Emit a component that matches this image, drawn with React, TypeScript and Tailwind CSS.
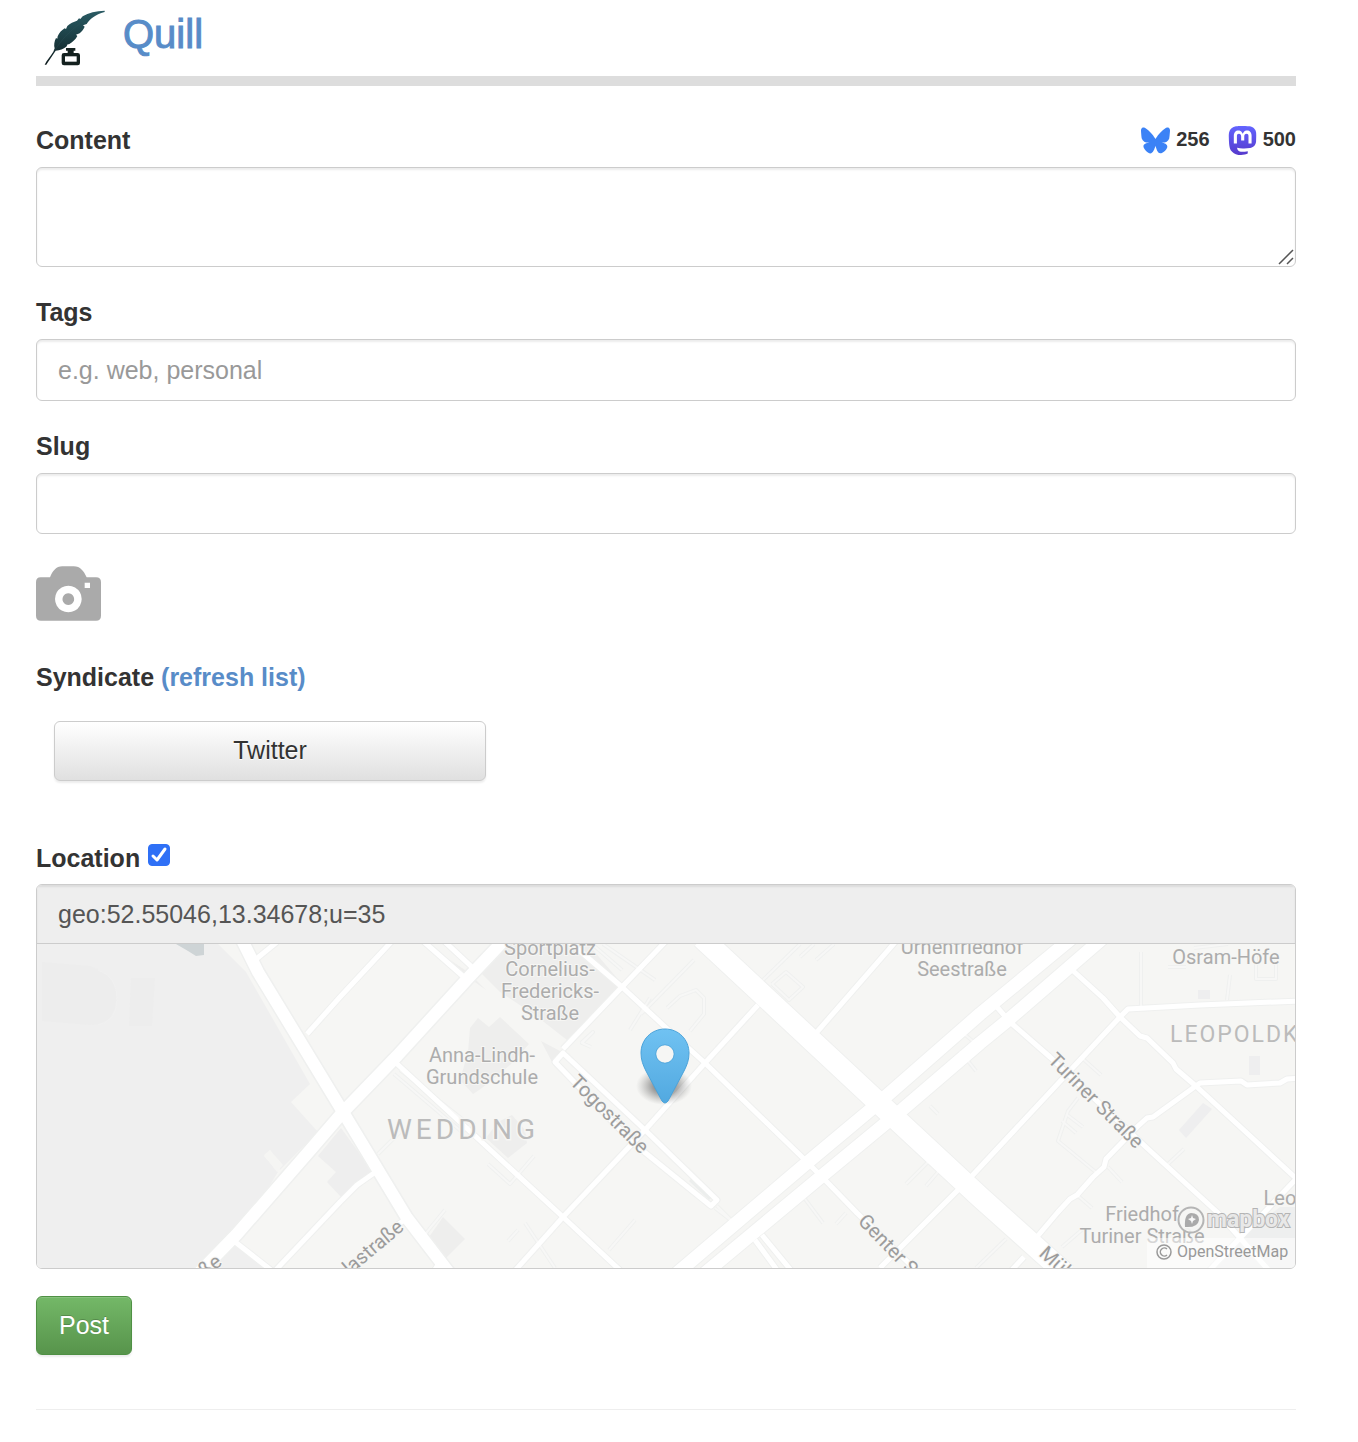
import React from "react";
import { FaBluesky } from "react-icons/fa6";
import { SiMastodon } from "react-icons/si";

const labelClass = "block text-[25px] leading-9 font-bold";
const fieldClass =
  "block w-full rounded-md border border-[#ccc] bg-white px-[21px] text-[25px] text-[#555] shadow-[inset_0_2px_2px_rgba(0,0,0,0.075)] placeholder:text-[#999]";

function QuillLogo() {
  return (
    <svg viewBox="42 31 183 168" className="h-14 w-[61px]" aria-hidden="true">
      <defs>
        <linearGradient id="feather" x1="0" y1="0" x2="0" y2="1">
          <stop offset="0" stopColor="#2a5b64" />
          <stop offset="0.5" stopColor="#1c3f45" />
          <stop offset="1" stopColor="#0f1b1d" />
        </linearGradient>
      </defs>
      <path
        fill="url(#feather)"
        d="M224 33C198 34 176 39 158 50L151 58L147 56L141 63C131 66 120 71 112 79L108 88L104 86C94 92 87 100 83 110L82 117L78 115C73 125 71 137 74 146L70 156C61 170 50 182 44 195L49 195C56 184 66 170 77 153C90 152 100 148 109 141L113 134L117 134C128 127 137 119 142 109L138 105L149 101C156 95 161 88 164 81L159 77L170 73C179 59 195 45 224 37Z"
      />
      <path d="M76 150C92 124 116 96 150 72" fill="none" stroke="#31565b" strokeWidth="1" />
      <path fill="#14211f" d="M108 145h28v8h-5v7h12q7 0 7 7v23q0 7-7 7h-41q-7 0-7-7v-23q0-7 7-7h11v-7h-5z" />
      <rect x="105" y="170" width="35" height="16" fill="#fff" />
    </svg>
  );
}

function CameraIcon() {
  return (
    <svg viewBox="18 33 195 165" className="h-[55px] w-[65px]" aria-hidden="true">
      <path
        fill="#aaa"
        fillRule="evenodd"
        d="M32 67H60C68 48 78 34 97 34H131C151 34 161 48 170 67H198Q213 67 213 82V182Q213 197 198 197H33Q18 197 18 182V82Q18 67 32 67ZM164 83V99H180V83ZM115 92a40 40 0 1 0 .1 0ZM115 115a17.500 17.500 0 1 1-.1 0Z"
      />
    </svg>
  );
}

const majorRoads = [
  "M242 940L258 972L343 1112L407 1218L450 1274",
  "M506 938L470 976L397 1056L343 1112L312 1148L237 1234L198 1274",
];
const boulevards = [
  "M676 1274L802 1167L875 1106L980 1014L1072 938",
  "M704 1274L817 1180L892 1118L903 1109L980 1043L1007 1021L1103 938",
];
const minorRoads = [
  "M255 960L277 942",
  "M307 1034L340 997L393 940",
  "M423 941L465 978M444 941L474 969",
  "M395 1062L563 1217L624 1274",
  "M566 939L622 987L663 1025L705 1063L802 1157L827 1182L857 1213L920 1274",
  "M667 940L622 987L563 1049",
  "M645 1130L717 1200L711 1206L632 1142L555 1062L563 1053L645 1130",
  "M758 1005L705 1063L645 1130L563 1217L512 1274",
  "M897 940L817 1032",
  "M1070 968L1103 998L1120 1017L1140 1036L1147 1038L1173 1063L1176 1069L1197 1087L1300 1182",
  "M970 1178L1120 1017L1128 1009L1200 1005L1300 1001",
  "M997 1007L1010 1022L1050 1057L1147 1148L1217 1212L1272 1274",
  "M1300 1078L1287 1079L1280 1083L1247 1085L1241 1081L1200 1083L1153 1117L1147 1118L1137 1127L1106 1159L1104 1167L1093 1177L1077 1195L1070 1199L1058 1212L1036 1238",
  "M1298 1177L1240 1238L1206 1274",
  "M958 1190L900 1248L880 1268M1024 1257L1010 1272",
  "M755 1240L780 1274M762 1235L794 1274",
  "M377 1171L357 1185L340 1202L272 1274",
  "M407 1218L392 1229M234 1241L276 1274M432 1274L440 1262",
];
const footways = [
  "M394 1074L462 1132L475 1122M400 1070L470 1125M488 1164L510 1184L534 1156M592 944L622 970M603 944L655 980M630 1030L650 998M641 1014L694 960M667 1008L680 996L696 990L704 998L704 1014L690 1031M581 1043L593 1032L582 1043L591 1047",
  "M763 980L800 944M772 984L786 972L803 987L789 1000L772 984M800 957L814 944M816 960L834 944M938 1114L930 1106M906 1184L928 1162M926 1186L938 1172M805 1199L823 1223M836 1224L846 1213M960 1051L976 1071M964 1034L980 1047M378 1154L400 1132M422 1238L445 1210M508 1241L518 1230M525 1223L555 1268M609 1250L635 1220M715 1208L733 1222L717 1206",
  "M1141 952V1006M1230 975L1227 1000M1082 1058L1101 1075M1078 1098L1068 1111L1058 1141L1098 1174M1062 1121L1076 1133M1066 1114L1083 1127M1108 1167L1122 1182M1077 1195L1092 1208M1168 1164L1184 1149M1168 967H1186M1256 956V979H1276V956M976 1268L1006 1239M1062 1247L1084 1228M1194 948L1228 944",
];

type MapLabel = { x: number; y: number; text: string };
const placeLabels: MapLabel[] = [
  { x: 550, y: 955, text: "Sportplatz" },
  { x: 550, y: 976, text: "Cornelius-" },
  { x: 550, y: 998, text: "Fredericks-" },
  { x: 550, y: 1020, text: "Straße" },
  { x: 482, y: 1062, text: "Anna-Lindh-" },
  { x: 482, y: 1084, text: "Grundschule" },
  { x: 962, y: 954, text: "Urnenfriedhof" },
  { x: 962, y: 976, text: "Seestraße" },
  { x: 1226, y: 964, text: "Osram-Höfe" },
  { x: 1142, y: 1221, text: "Friedhof" },
  { x: 1142, y: 1243, text: "Turiner Straße" },
  { x: 1280, y: 1205, text: "Leo" },
];

function LocationMap() {
  return (
    <svg
      viewBox="37 944 1258 324"
      preserveAspectRatio="xMidYMid slice"
      className="block h-[324px] w-full bg-[#f6f6f4] font-[Roboto,sans-serif]"
      role="img"
      aria-label="Map of Berlin-Wedding with the current location"
    >
      <defs>
        <linearGradient id="pin" x1="0" y1="0" x2="0" y2="1">
          <stop offset="0" stopColor="#70c2f2" />
          <stop offset="1" stopColor="#52a9e0" />
        </linearGradient>
        <radialGradient id="pinShadow">
          <stop offset="0" stopColor="#222" stopOpacity="0.8" />
          <stop offset="0.5" stopColor="#444" stopOpacity="0.4" />
          <stop offset="1" stopColor="#777" stopOpacity="0" />
        </radialGradient>
      </defs>

      <path d="M37 944H218L246 972L310 1084L291 1102L318 1132L280 1170L270 1150L264 1156L278 1172L235 1242L272 1268H37Z" fill="#efefef" />
      <path d="M264 1155L270 1150L283 1165L277 1172Z" fill="#f5f5f3" />
      <path d="M42 962L90 966Q117 975 117 1000Q114 1025 90 1025L42 1021ZM131 978H155L152 1026H129Z" fill="#ededed" />
      <path d="M98 970Q118 977 117 1000Q116 1022 98 1025" fill="none" stroke="#f0f0f0" strokeWidth="1" />
      <path d="M176 944H204V955L196 956L188 951Z" fill="#ced4d6" />
      <path
        fill="#eeeeed"
        d="M500 944H588L622 984L567 1040L535 1015L500 992L480 972ZM470 1028L478 1018L489 1027L500 1017L529 1044L510 1065L495 1077L482 1088L473 1094L460 1080L468 1052ZM486 1138L498 1122L512 1115L525 1130L527 1143L508 1158ZM541 1041L562 1052L552 1062ZM427 1240L443 1217L465 1239L446 1258ZM450 960L468 972L478 982L486 990L472 980Z"
      />
      <path d="M318 1156L341 1128L373 1172L342 1198L327 1182L336 1172Z" fill="#eeeeee" />
      <path d="M1198 990H1210V999H1198ZM1249 1056H1260V1075H1249ZM1179 1130L1203 1103L1212 1109L1186 1138Z" fill="#eeeeef" />
      <path d="M1240 1238L1280 1207H1295V1268H1215Z" fill="#eeefef" />

      <g fill="none" strokeLinejoin="round">
        <g stroke="#eff0ef">
          {footways.map((d) => (
            <path key={d} d={d} strokeWidth="4" />
          ))}
          {minorRoads.map((d) => (
            <path key={d} d={d} strokeWidth="7" />
          ))}
          {majorRoads.map((d) => (
            <path key={d} d={d} strokeWidth="15" />
          ))}
          {boulevards.map((d) => (
            <path key={d} d={d} strokeWidth="15" />
          ))}
          <path d="M702 938L882 1106L980 1197L1066 1274" strokeWidth="23" />
        </g>
        <g stroke="#fff">
          {footways.map((d) => (
            <path key={d} d={d} strokeWidth="2" stroke="#f7f7f6" />
          ))}
          {minorRoads.map((d) => (
            <path key={d} d={d} strokeWidth="5" />
          ))}
          {majorRoads.map((d) => (
            <path key={d} d={d} strokeWidth="12" />
          ))}
          {boulevards.map((d) => (
            <path key={d} d={d} strokeWidth="13" />
          ))}
          <path d="M702 938L882 1106L980 1197L1066 1274" strokeWidth="21" />
        </g>
      </g>
      <path d="M690 1180L710 1199" stroke="#eceeed" strokeWidth="3" />

      <g className="text-[20px]" fill="#acacac" stroke="#f6f6f4" strokeWidth="2" paintOrder="stroke" textAnchor="middle">
        {placeLabels.map((label) => (
          <text key={label.text} x={label.x} y={label.y}>
            {label.text}
          </text>
        ))}
      </g>
      <g fill="#bbb" stroke="#f6f6f4" strokeWidth="3" paintOrder="stroke">
        <text x="387" y="1139" className="text-[28px] tracking-[4px]">WEDDING</text>
        <text x="1170" y="1042" className="text-[23px] tracking-[2px]">LEOPOLDK</text>
      </g>
      <g className="text-[20px]" fill="#9c9c9c" stroke="#f6f6f4" strokeWidth="2" paintOrder="stroke">
        <text transform="translate(569 1083) rotate(45)">Togostraße</text>
        <text transform="translate(1047 1061) rotate(45)">Turiner Straße</text>
        <text transform="translate(857 1222) rotate(46)">Genter S</text>
        <text transform="translate(1038 1255) rotate(42)">Mül</text>
        <text transform="translate(405 1229) rotate(-40)" textAnchor="end">lastraße</text>
        <text transform="translate(223 1264) rotate(-38)" textAnchor="end">ße</text>
      </g>

      <ellipse cx="664" cy="1086" rx="28" ry="19" fill="url(#pinShadow)" />
      <path
        d="M665 1029C651 1029 641 1040 641 1053C641 1060 643 1065 646 1071L662 1101Q665 1105 668 1101L684 1071C687 1065 689 1060 689 1053C689 1040 679 1029 665 1029ZM665 1045A9 9 0 1 1 664.900 1045Z"
        fill="url(#pin)"
        stroke="#4ba3da"
        strokeWidth="1"
      />
      <circle cx="665" cy="1054" r="8.500" fill="#f6f6f4" />

      <rect x="1147" y="1238" width="148" height="30" fill="#fff" fillOpacity="0.5" />
      <g>
        <circle cx="1191" cy="1220" r="12.500" fill="#f6f6f4" fillOpacity="0.9" stroke="#b5b5b5" strokeWidth="2" />
        <path d="M1185 1227Q1184 1214 1191 1213Q1199 1213 1199 1220Q1198 1228 1185 1227Z" fill="#aaa" />
        <path d="M1192 1215L1193 1218L1196 1219L1193 1221L1192 1224L1191 1221L1188 1219L1191 1218Z" fill="#f8f8f8" />
        <text x="1207" y="1227" className="text-[23px] font-bold" fill="#e8e8e8" stroke="#b4b4b4" strokeWidth="2" paintOrder="stroke">
          mapbox
        </text>
      </g>
      <circle cx="1164" cy="1252" r="7" fill="none" stroke="#999" strokeWidth="1.500" />
      <path d="M1167 1249A4 4 0 1 0 1167 1255" fill="none" stroke="#999" strokeWidth="1.500" />
      <text x="1177" y="1257" className="text-[16px]" fill="#999">OpenStreetMap</text>
    </svg>
  );
}

export default function App() {
  return (
    <div className="min-h-screen bg-white pr-[62px] pl-9 font-['Liberation_Sans',Arial,sans-serif] text-[#333]">
      <header className="flex h-[86px] items-start gap-[18px] border-b-10 border-[#ddd] pt-[10px] pl-2">
        <QuillLogo />
        <h1 className="text-[40px] leading-12 text-[#588cc8] [-webkit-text-stroke:1px_#588cc8]">
          <a href="#home">Quill</a>
        </h1>
      </header>

      <form className="pt-9" onSubmit={(e) => e.preventDefault()}>
        <div className="mb-[27px]">
          <div className="mb-[9px] flex items-start justify-between">
            <label htmlFor="content" className={labelClass}>Content</label>
            <div className="flex gap-[18px] text-xl leading-7 font-bold">
              <span className="flex items-center gap-[6px]">
                <FaBluesky className="mt-1 size-[29px]" color="#3b82f6" aria-hidden="true" />
                256
              </span>
              <span className="flex items-center gap-[6px]">
                <svg width="0" height="0" className="absolute" aria-hidden="true">
                  <linearGradient id="mastodon" x1="0" y1="0" x2="0" y2="1">
                    <stop offset="0" stopColor="#6364ff" />
                    <stop offset="1" stopColor="#563acc" />
                  </linearGradient>
                </svg>
                <SiMastodon className="mt-1 size-[29px]" fill="url(#mastodon)" aria-hidden="true" />
                500
              </span>
            </div>
          </div>
          <div className="relative">
            <textarea id="content" className={`${fieldClass} h-[100px] resize-none py-[10px]`} />
            <svg viewBox="0 0 16 16" className="pointer-events-none absolute right-[2px] bottom-[2px] size-4" aria-hidden="true">
              <path d="M1 15L15 1M9 15L15 9" stroke="#555" strokeWidth="1.500" fill="none" />
            </svg>
          </div>
        </div>

        <div className="mb-[27px]">
          <label htmlFor="tags" className={`${labelClass} mb-[9px]`}>Tags</label>
          <input id="tags" type="text" placeholder="e.g. web, personal" className={`${fieldClass} h-[62px]`} />
        </div>

        <div className="mb-8">
          <label htmlFor="slug" className={`${labelClass} mb-[9px]`}>Slug</label>
          <input id="slug" type="text" className={`${fieldClass} h-[61px]`} />
        </div>

        <button type="button" aria-label="Add photo" className="block">
          <CameraIcon />
        </button>

        <div className="mt-[38px]">
          <p className={labelClass}>
            Syndicate <a href="#refresh" className="text-[#588cc8]">(refresh list)</a>
          </p>
          <button
            type="button"
            className="mt-[26px] ml-[18px] block h-[60px] w-[432px] max-w-full rounded-md border border-[#ccc] bg-linear-to-b from-white to-[#e0e0e0] text-[25px] shadow-[0_2px_2px_rgba(0,0,0,0.075)] [text-shadow:0_1px_0_#fff]"
          >
            Twitter
          </button>
        </div>

        <div className="mt-[59px]">
          <div className="mb-2 flex items-start gap-2">
            <label htmlFor="location" className={labelClass}>Location</label>
            <span className="mt-1 grid size-[22px]">
              <input
                id="location"
                type="checkbox"
                defaultChecked
                className="peer col-start-1 row-start-1 size-[22px] appearance-none rounded border border-[#888] checked:border-[#2f70f6] checked:bg-[#2f70f6]"
              />
              <svg viewBox="0 0 22 22" className="pointer-events-none invisible col-start-1 row-start-1 size-[22px] peer-checked:visible" aria-hidden="true">
                <path d="M5 12L9 16L17 5" stroke="#fff" strokeWidth="3" strokeLinecap="round" strokeLinejoin="round" fill="none" />
              </svg>
            </span>
          </div>
          <div className="overflow-hidden rounded-md border border-[#ccc]">
            <input
              type="text"
              readOnly
              aria-label="Coordinates"
              value="geo:52.55046,13.34678;u=35"
              className="block h-[59px] w-full border-b border-[#ccc] bg-[#eee] px-[21px] text-[25px] text-[#555] shadow-[inset_0_2px_2px_rgba(0,0,0,0.075)]"
            />
            <LocationMap />
          </div>
        </div>

        <button
          type="submit"
          className="mt-[27px] h-[59px] rounded-md border border-[#4f9044] bg-linear-to-b from-[#74b868] to-[#57944b] px-[22px] text-[25px] text-white shadow-[inset_0_1px_0_rgba(255,255,255,0.15),0_2px_2px_rgba(0,0,0,0.075)] [text-shadow:0_-1px_0_rgba(0,0,0,0.2)]"
        >
          Post
        </button>
      </form>

      <hr className="mt-[54px] border-[#eee]" />
    </div>
  );
}
